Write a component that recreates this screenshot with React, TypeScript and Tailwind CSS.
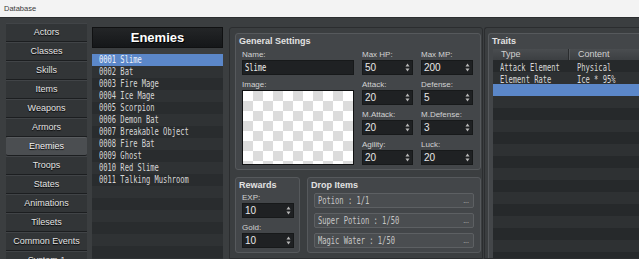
import React from "react";

const SANS = "font-['Liberation_Sans',Arial,sans-serif]";
const MONO = "font-['DejaVu_Sans_Mono',monospace]";

const navItems = [
  "Actors",
  "Classes",
  "Skills",
  "Items",
  "Weapons",
  "Armors",
  "Enemies",
  "Troops",
  "States",
  "Animations",
  "Tilesets",
  "Common Events",
  "System 1",
];

const enemies = [
  "0001 Slime",
  "0002 Bat",
  "0003 Fire Mage",
  "0004 Ice Mage",
  "0005 Scorpion",
  "0006 Demon Bat",
  "0007 Breakable Object",
  "0008 Fire Bat",
  "0009 Ghost",
  "0010 Red Slime",
  "0011 Talking Mushroom",
];

const traits = [
  { type: "Attack Element", content: "Physical" },
  { type: "Element Rate", content: "Ice * 95%" },
];

const drops = ["Potion : 1/1", "Super Potion : 1/50", "Magic Water : 1/50"];

function Condensed({ children }: { children: React.ReactNode }) {
  return (
    <span
      className={`inline-block origin-left scale-x-[0.71] whitespace-nowrap text-[10px] leading-none ${MONO}`}
    >
      {children}
    </span>
  );
}

function Spin() {
  return (
    <svg width="5" height="9" viewBox="0 0 5 9" className="shrink-0">
      <path d="M2.5 0.5 L4.5 3.5 L0.5 3.5 Z" fill="#b8b8b8" />
      <path d="M2.5 8.5 L4.5 5.5 L0.5 5.5 Z" fill="#b8b8b8" />
    </svg>
  );
}

function Label({ children }: { children: React.ReactNode }) {
  return (
    <div className="h-[11px] text-[8px] leading-[11px] text-[#d2d2d2] whitespace-nowrap">
      {children}
    </div>
  );
}

function NumField({ label, value, w }: { label: string; value: string; w: string }) {
  return (
    <div className={`flex flex-col ${w}`}>
      <Label>{label}</Label>
      <div className="h-[15px] flex items-center justify-between bg-[#1f2123] border border-[#17191a] pl-[2px] pr-[2px]">
        <span className="text-[10px] leading-none text-[#e8e8e8]">{value}</span>
        <Spin />
      </div>
    </div>
  );
}

function GroupTitle({ children }: { children: React.ReactNode }) {
  return (
    <div className="h-[12px] pl-[3px] text-[9px] font-bold leading-[12px] text-[#e2e2e2] whitespace-nowrap">
      {children}
    </div>
  );
}

export default function App() {
  const listRows = Array.from({ length: 18 }, (_, i) => enemies[i] ?? "");
  const traitRows = Array.from({ length: 18 }, (_, i) => traits[i]);

  return (
    <div className={`w-[639px] h-[259px] overflow-hidden flex flex-col bg-[#3b3e40] ${SANS}`}>
      {/* title bar */}
      <div className="h-[18px] shrink-0 bg-[#f3f3f3] border-b border-[#2b2d2f] flex items-center pl-[4px] text-[7.5px] text-[#3a3a3a]">
        Database
      </div>

      <div className="flex-1 flex min-h-0">
        {/* nav */}
        <div className="ml-[6px] mt-[5px] w-[81px] flex flex-col shrink-0">
          {navItems.map((n) => {
            const sel = n === "Enemies";
            return (
              <div
                key={n}
                className={
                  sel
                    ? "h-[19px] shrink-0 flex items-center justify-center rounded-[2px] bg-[#4b4e51] border-t border-[#5a5d60] border-b border-b-[#1c1e20] text-[9px] text-[#f2f2f2] [text-shadow:0_1px_1px_#000]"
                    : "h-[19px] shrink-0 flex items-center justify-center bg-[#323537] border-t border-[#414447] border-b border-b-[#1c1e20] text-[9px] text-[#e4e4e4] [text-shadow:0_1px_1px_#000]"
                }
              >
                {n}
              </div>
            );
          })}
        </div>

        <div className="w-[5px] shrink-0" />

        {/* enemies list */}
        <div className="w-[131px] shrink-0 flex flex-col mt-[9px]">
          <div className="h-[21px] shrink-0 flex items-center justify-center bg-[linear-gradient(#232527,#151719)] border border-[#101112] text-[13px] font-bold text-white [text-shadow:1px_1px_0_#000]">
            Enemies
          </div>
          <div className="mt-[6px] flex flex-col">
            {listRows.map((e, i) => (
              <div
                key={i}
                className={
                  i === 0
                    ? "h-[12px] shrink-0 flex items-center pl-[7px] bg-[#5b87c9] text-[#eef3fb]"
                    : i % 2 === 1
                    ? "h-[12px] shrink-0 flex items-center pl-[7px] bg-[#2f3234] text-[#d6d6d6]"
                    : "h-[12px] shrink-0 flex items-center pl-[7px] bg-[#292c2e] text-[#d6d6d6]"
                }
              >
                <Condensed>{e}</Condensed>
              </div>
            ))}
          </div>
        </div>

        <div className="w-[6px] shrink-0" />

        {/* main panel */}
        <div className="w-[254px] shrink-0 mt-[9px] rounded-t-[3px] border border-[#2b2d2f] bg-[#3b3e40] pl-[5px] pr-[1px] pt-[5px] flex flex-col">
          {/* general settings */}
          <div className="h-[137px] shrink-0 rounded-[3px] border border-[#56595c] bg-[#434649] pt-[1px] flex flex-col">
            <GroupTitle>General Settings</GroupTitle>
            <div className="mt-[2px] pl-[6px] flex gap-[8px]">
              <div className="w-[112px] flex flex-col">
                <Label>Name:</Label>
                <div className="h-[15px] flex items-center bg-[#1f2123] border border-[#17191a] pl-[2px] text-[#ececec]">
                  <Condensed>Slime</Condensed>
                </div>
                <div className="mt-[4px]">
                  <Label>Image:</Label>
                </div>
                <div className="h-[75px] border border-[#111213] [background-image:conic-gradient(#dcdcdc_25%,#ffffff_0_50%,#dcdcdc_0_75%,#ffffff_0)] [background-size:20px_20px]" />
              </div>
              <div className="flex flex-col gap-[4px]">
                <NumField label="Max HP:" value="50" w="w-[51px]" />
                <NumField label="Attack:" value="20" w="w-[51px]" />
                <NumField label="M.Attack:" value="20" w="w-[51px]" />
                <NumField label="Agility:" value="20" w="w-[51px]" />
              </div>
              <div className="flex flex-col gap-[4px]">
                <NumField label="Max MP:" value="200" w="w-[52px]" />
                <NumField label="Defense:" value="5" w="w-[52px]" />
                <NumField label="M.Defense:" value="3" w="w-[52px]" />
                <NumField label="Luck:" value="20" w="w-[52px]" />
              </div>
            </div>
          </div>

          <div className="mt-[7px] flex gap-[7px]">
            {/* rewards */}
            <div className="w-[65px] h-[76px] shrink-0 rounded-[3px] border border-[#56595c] bg-[#434649] pt-[1px] flex flex-col">
              <div className="h-[13px]">
                <GroupTitle>Rewards</GroupTitle>
              </div>
              <div className="pl-[6px] flex flex-col gap-[4px]">
                <NumField label="EXP:" value="10" w="w-[52px]" />
                <NumField label="Gold:" value="10" w="w-[52px]" />
              </div>
            </div>

            {/* drop items */}
            <div className="flex-1 h-[76px] rounded-[3px] border border-[#56595c] bg-[#434649] pt-[1px] flex flex-col">
              <div className="h-[13px]">
                <GroupTitle>Drop Items</GroupTitle>
              </div>
              <div className="mt-[1px] px-[6px] flex flex-col gap-[5px]">
                {drops.map((d) => (
                  <div
                    key={d}
                    className="h-[15px] flex items-center justify-between rounded-[2px] border border-[#5d6063] bg-[#4a4d50] pl-[3px] pr-[4px] text-[#c6c6c6]"
                  >
                    <Condensed>{d}</Condensed>
                    <span className="text-[7px] leading-none text-[#c8c8c8]">...</span>
                  </div>
                ))}
              </div>
            </div>
          </div>
        </div>

        <div className="w-[1px] shrink-0" />

        {/* traits panel */}
        <div className="flex-1 min-w-0 mt-[9px] rounded-tl-[3px] border border-r-0 border-[#2b2d2f] bg-[#3b3e40] pl-[3px] pt-[5px] flex flex-col">
          <div className="flex-1 rounded-tl-[3px] border border-r-0 border-b-0 border-[#56595c] bg-[#434649] pt-[1px] pl-[4px] flex flex-col overflow-hidden">
            <div className="-ml-[4px]">
              <GroupTitle>Traits</GroupTitle>
            </div>
            <div className="mt-[2px] flex flex-col">
              <div className="h-[11px] shrink-0 flex bg-[linear-gradient(#4a4d50,#3c3f42)] text-[9px] leading-none text-[#d0d0d0]">
                <div className="w-[76px] shrink-0 flex items-center pl-[8px] border-r border-[#2a2c2e]">
                  Type
                </div>
                <div className="flex-1 flex items-center pl-[8px] border-l border-[#55585b]">Content</div>
              </div>
              {traitRows.map((t, i) => (
                <div
                  key={i}
                  className={
                    i === 2
                      ? "h-[12px] shrink-0 flex items-center bg-[#5b87c9] text-[#eef3fb]"
                      : i % 2 === 0
                      ? "h-[12px] shrink-0 flex items-center bg-[#26292b] text-[#d8d8d8]"
                      : "h-[12px] shrink-0 flex items-center bg-[#2e3133] text-[#d8d8d8]"
                  }
                >
                  <div className="w-[76px] shrink-0 pl-[7px]">
                    {t ? <Condensed>{t.type}</Condensed> : null}
                  </div>
                  <div className="flex-1 pl-[8px]">{t ? <Condensed>{t.content}</Condensed> : null}</div>
                </div>
              ))}
            </div>
          </div>
        </div>
      </div>
    </div>
  );
}
